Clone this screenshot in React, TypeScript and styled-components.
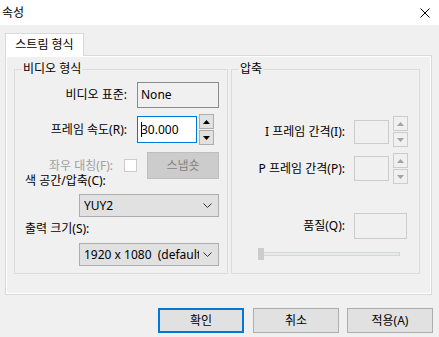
import React from 'react'
import styled, { createGlobalStyle } from 'styled-components';

const Global = createGlobalStyle`
    html, body {
        margin: 0;
        padding: 0;
        background: #f0f0f0;
    }
    body {
        font-family: "Noto Sans", "Noto Sans CJK KR", sans-serif;
        font-size: 12px;
        color: #000;
    }
`;

const Window = styled.div`
    width: 439px;
    height: 337px;
    display: flex;
    flex-direction: column;
    background: #f0f0f0;
    overflow: hidden;
`;
const TitleBar = styled.div`
    height: 25px;
    background: #fff;
    display: flex;
    align-items: center;
    justify-content: space-between;
    padding: 0 9px 0 2px;
    line-height: 16px;
`;
const Body = styled.div`
    padding: 8px 0 0 5px;
    display: flex;
    flex-direction: column;
`;
const TabStrip = styled.div`
    display: flex;
    height: 22px;
    position: relative;
    z-index: 1;
`;
const Tab = styled.div`
    width: 79px;
    height: 23px;
    box-sizing: border-box;
    background: #fff;
    border: 1px solid #d9d9d9;
    border-bottom: none;
    display: flex;
    align-items: center;
    justify-content: center;
    padding-bottom: 1px;
    line-height: 16px;
`;
const Panel = styled.div`
    width: 427px;
    height: 240px;
    box-sizing: border-box;
    border: 1px solid #d9d9d9;
    box-shadow: inset 0 0 0 1px #fff;
    display: flex;
    align-items: flex-start;
    gap: 3px;
    padding: 13px 0 0 8px;
`;
const Group = styled.div<{ $w: number; $h: number }>`
    position: relative;
    width: ${p => p.$w}px;
    height: ${p => p.$h}px;
    box-sizing: border-box;
    border: 1px solid #dcdcdc;
    display: flex;
    flex-direction: column;
`;
const Legend = styled.span`
    position: absolute;
    top: -9px;
    left: 7px;
    padding: 0 1px;
    background: #f0f0f0;
    line-height: 16px;
`;
const Row = styled.div<{ $mt: number }>`
    display: flex;
    align-items: center;
    margin-top: ${p => p.$mt}px;
`;
const Label = styled.span<{ $w: number; $disabled?: boolean }>`
    width: ${p => p.$w}px;
    text-align: right;
    line-height: 16px;
    white-space: nowrap;
    color: ${p => (p.$disabled ? '#a0a0a0' : '#000')};
`;
const FreeLabel = styled.div<{ $mt: number }>`
    margin: ${p => p.$mt}px 0 0 10px;
    line-height: 14px;
    white-space: nowrap;
`;
const Field = styled.div<{ $w: number; $h: number; $ml: number; $state: 'read' | 'focus' | 'off' }>`
    width: ${p => p.$w}px;
    height: ${p => p.$h}px;
    margin-left: ${p => p.$ml}px;
    box-sizing: border-box;
    border: 1px solid ${p => (p.$state === 'focus' ? '#0078d7' : p.$state === 'read' ? '#8a8a8a' : '#cccccc')};
    background: ${p => (p.$state === 'focus' ? '#fff' : '#f0f0f0')};
    display: flex;
    align-items: center;
    padding-left: 3px;
    line-height: 16px;
`;
const Caret = styled.span`
    display: inline-block;
    width: 1px;
    height: 15px;
    background: #000;
    margin-right: -1px;
`;
const Spinner = styled.div<{ $ml: number }>`
    display: flex;
    flex-direction: column;
    gap: 1px;
    margin-left: ${p => p.$ml}px;
`;
const SpinButton = styled.div<{ $off?: boolean }>`
    width: 15px;
    height: 15px;
    box-sizing: border-box;
    border: 1px solid ${p => (p.$off ? '#cccccc' : '#adadad')};
    background: ${p => (p.$off ? '#f0f0f0' : '#e1e1e1')};
    display: flex;
    align-items: center;
    justify-content: center;
`;
const CheckBox = styled.div`
    width: 13px;
    height: 13px;
    box-sizing: border-box;
    border: 1px solid #cccccc;
    background: #fff;
    margin-left: 11px;
`;
const Button = styled.div<{ $w: number; $ml: number; $h: number; $default?: boolean; $off?: boolean }>`
    width: ${p => p.$w}px;
    height: ${p => p.$h}px;
    margin-left: ${p => p.$ml}px;
    box-sizing: border-box;
    border: ${p => (p.$default ? '2px solid #0078d7' : p.$off ? '1px solid #bfbfbf' : '1px solid #adadad')};
    background: ${p => (p.$off ? '#cccccc' : '#e1e1e1')};
    color: ${p => (p.$off ? '#838383' : '#000')};
    display: flex;
    align-items: center;
    justify-content: center;
    line-height: 16px;
`;
const Select = styled.div<{ $mt: number }>`
    width: 140px;
    height: 23px;
    margin: ${p => p.$mt}px 0 0 64px;
    box-sizing: border-box;
    border: 1px solid #adadad;
    background: #e1e1e1;
    display: flex;
    align-items: center;
    padding: 0 6px 0 4px;
    line-height: 16px;
`;
const SelectText = styled.span`
    flex: 1;
    overflow: hidden;
    white-space: pre;
    margin-right: 4px;
`;
const Slider = styled.div`
    position: relative;
    width: 142px;
    height: 12px;
    margin: 9px 0 0 26px;
    display: flex;
    align-items: center;
`;
const Track = styled.div`
    width: 100%;
    height: 4px;
    box-sizing: border-box;
    border: 1px solid #d6d6d6;
    background: #e7eaea;
`;
const Thumb = styled.div`
    position: absolute;
    left: 0;
    top: 0;
    width: 6px;
    height: 12px;
    background: #cccccc;
`;
const ButtonRow = styled.div`
    display: flex;
    margin: 13px 0 0 153px;
`;

const Arrow: React.FC<{ up?: boolean; off?: boolean }> = ({ up, off }) => (
    <svg width="7" height="4" viewBox="0 0 7 4">
        <polygon points={up ? '0,4 7,4 3.5,0' : '0,0 7,0 3.5,4'} fill={off ? '#a3a3a3' : '#000'} />
    </svg>
);

const Chevron = () => (
    <svg width="9" height="5" viewBox="0 0 9 5">
        <polyline points="0.5,0.5 4.5,4.5 8.5,0.5" fill="none" stroke="#333" strokeWidth="1" />
    </svg>
);

const App: React.FC = () => {
    return (
        <>
            <Global />
            <Window>
                <TitleBar>
                    <span>속성</span>
                    <svg width="10" height="10" viewBox="0 0 10 10">
                        <path d="M0.5 0.5 L9.5 9.5 M9.5 0.5 L0.5 9.5" stroke="#000" strokeWidth="1" />
                    </svg>
                </TitleBar>
                <Body>
                    <TabStrip>
                        <Tab>스트림 형식</Tab>
                    </TabStrip>
                    <Panel>
                        <Group $w={214} $h={205}>
                            <Legend>비디오 형식</Legend>
                            <Row $mt={12}>
                                <Label $w={112}>비디오 표준:</Label>
                                <Field $w={82} $h={26} $ml={10} $state="read">None</Field>
                            </Row>
                            <Row $mt={6}>
                                <Label $w={112}>프레임 속도(R):</Label>
                                <Field $w={60} $h={27} $ml={10} $state="focus">
                                    <Caret />30.000
                                </Field>
                                <Spinner $ml={2}>
                                    <SpinButton><Arrow up /></SpinButton>
                                    <SpinButton><Arrow /></SpinButton>
                                </Spinner>
                            </Row>
                            <Row $mt={7}>
                                <Label $w={98} $disabled>좌우 대칭(F):</Label>
                                <CheckBox />
                                <Button $w={72} $h={27} $ml={10} $off>스냅숏</Button>
                            </Row>
                            <FreeLabel $mt={-5}>색 공간/압축(C):</FreeLabel>
                            <Select $mt={6}>
                                <SelectText>YUY2</SelectText>
                                <Chevron />
                            </Select>
                            <FreeLabel $mt={5}>출력 크기(S):</FreeLabel>
                            <Select $mt={7}>
                                <SelectText>1920 x 1080  (default)</SelectText>
                                <Chevron />
                            </Select>
                        </Group>
                        <Group $w={189} $h={205}>
                            <Legend>압축</Legend>
                            <Row $mt={46}>
                                <Label $w={113}>I 프레임 간격(I):</Label>
                                <Field $w={35} $h={24} $ml={9} $state="off" />
                                <Spinner $ml={4}>
                                    <SpinButton $off><Arrow up off /></SpinButton>
                                    <SpinButton $off><Arrow off /></SpinButton>
                                </Spinner>
                            </Row>
                            <Row $mt={6}>
                                <Label $w={113}>P 프레임 간격(P):</Label>
                                <Field $w={35} $h={25} $ml={9} $state="off" />
                                <Spinner $ml={4}>
                                    <SpinButton $off><Arrow up off /></SpinButton>
                                    <SpinButton $off><Arrow off /></SpinButton>
                                </Spinner>
                            </Row>
                            <Row $mt={29}>
                                <Label $w={113}>품질(Q):</Label>
                                <Field $w={53} $h={26} $ml={9} $state="off" />
                            </Row>
                            <Slider>
                                <Track />
                                <Thumb />
                            </Slider>
                        </Group>
                    </Panel>
                    <ButtonRow>
                        <Button $w={86} $h={25} $ml={0} $default>확인</Button>
                        <Button $w={86} $h={25} $ml={9}>취소</Button>
                        <Button $w={86} $h={25} $ml={8}>적용(A)</Button>
                    </ButtonRow>
                </Body>
            </Window>
        </>
    )
}

export default App
